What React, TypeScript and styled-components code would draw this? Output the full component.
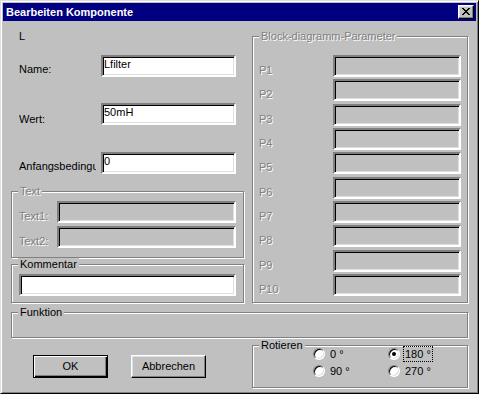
import styled, { createGlobalStyle } from 'styled-components';

const GlobalStyle = createGlobalStyle`
  html, body {
    margin: 0;
    padding: 0;
    background: #c0c0c0;
  }
  body {
    font-family: 'Liberation Sans', Arial, sans-serif;
    font-size: 11px;
  }
`;

const PARAMS = ['P1', 'P2', 'P3', 'P4', 'P5', 'P6', 'P7', 'P8', 'P9', 'P10'];

const CloseGlyph = () => (
  <svg width="8" height="7" viewBox="0 0 8 7" shapeRendering="crispEdges">
    <path
      d="M0 0h2v1H0zM6 0h2v1H6zM1 1h2v1H1zM5 1h2v1H5zM2 2h4v1H2zM3 3h2v1H3zM2 4h4v1H2zM1 5h2v1H1zM5 5h2v1H5zM0 6h2v1H0zM6 6h2v1H6z"
      fill="#000"
    />
  </svg>
);

const App = () => {
  return (
    <>
      <GlobalStyle />
      <Window>
        <TitleBar>
          <Title>Bearbeiten Komponente</Title>
          <CloseButton>
            <CloseGlyph />
          </CloseButton>
        </TitleBar>
        <Body>
          <TopRow>
            <LeftColumn>
              <TypeLabel>L</TypeLabel>
              <FieldRow $top={12}>
                <FieldLabel $offset={8}>Name:</FieldLabel>
                <Edit $width={135}>Lfilter</Edit>
              </FieldRow>
              <FieldRow $top={26}>
                <FieldLabel $offset={10}>Wert:</FieldLabel>
                <Edit $width={135}>50mH</Edit>
              </FieldRow>
              <FieldRow $top={27}>
                <FieldLabel $offset={8}>Anfangsbedingu</FieldLabel>
                <Edit $width={135}>0</Edit>
              </FieldRow>
              <Group $top={17} $height={67}>
                <GroupTitle $disabled>Text</GroupTitle>
                <TextRows>
                  <TextRow>
                    <SmallLabel $disabled>Text1:</SmallLabel>
                    <Edit $width={179} $disabled />
                  </TextRow>
                  <TextRow>
                    <SmallLabel $disabled>Text2:</SmallLabel>
                    <Edit $width={179} $disabled />
                  </TextRow>
                </TextRows>
              </Group>
              <Group $top={6} $height={39}>
                <GroupTitle>Kommentar</GroupTitle>
                <CommentBody>
                  <Edit $width={217} />
                </CommentBody>
              </Group>
            </LeftColumn>
            <RightColumn>
              <Group $height={267}>
                <GroupTitle $disabled>Block-diagramm-Parameter</GroupTitle>
                <ParamGrid>
                  {PARAMS.map((p) => (
                    <ParamRow key={p}>
                      <ParamLabel>{p}</ParamLabel>
                      <Edit $width={128} $disabled />
                    </ParamRow>
                  ))}
                </ParamGrid>
              </Group>
            </RightColumn>
          </TopRow>
          <Group $top={9} $height={26}>
            <GroupTitle>Funktion</GroupTitle>
          </Group>
          <BottomRow>
            <Buttons>
              <Button $default>OK</Button>
              <Button>Abbrechen</Button>
            </Buttons>
            <RotateGroup>
              <Group $height={43}>
                <GroupTitle>Rotieren</GroupTitle>
                <RadioGrid>
                  <RadioItem>
                    <Radio />
                    <RadioText>0 °</RadioText>
                  </RadioItem>
                  <RadioItem>
                    <Radio $checked />
                    <RadioText $focused>180 °</RadioText>
                  </RadioItem>
                  <RadioItem>
                    <Radio />
                    <RadioText>90 °</RadioText>
                  </RadioItem>
                  <RadioItem>
                    <Radio />
                    <RadioText>270 °</RadioText>
                  </RadioItem>
                </RadioGrid>
              </Group>
            </RotateGroup>
          </BottomRow>
        </Body>
      </Window>
    </>
  );
};

const Window = styled.div`
  box-sizing: border-box;
  width: 479px;
  height: 394px;
  padding: 2px;
  display: flex;
  flex-direction: column;
  background: #c0c0c0;
  border: 1px solid;
  border-color: #dfdfdf #000 #000 #dfdfdf;
  box-shadow: inset 1px 1px 0 #fff, inset -1px -1px 0 #808080;
  color: #000;
  font-family: 'Liberation Sans', Arial, sans-serif;
  font-size: 11px;
  line-height: 13px;
`;

const TitleBar = styled.div`
  height: 18px;
  flex-shrink: 0;
  display: flex;
  align-items: center;
  padding: 0 2px 0 3px;
  background: #000080;
`;

const Title = styled.span`
  flex: 1;
  color: #fff;
  font-weight: bold;
  font-size: 11px;
`;

const CloseButton = styled.div`
  box-sizing: border-box;
  width: 16px;
  height: 14px;
  display: flex;
  align-items: center;
  justify-content: center;
  padding: 0 1px 1px 0;
  background: #c0c0c0;
  border: 1px solid;
  border-color: #fff #000 #000 #fff;
  box-shadow: inset -1px -1px 0 #808080, inset 1px 1px 0 #dfdfdf;
`;

const Body = styled.div`
  flex: 1;
  display: flex;
  flex-direction: column;
  padding: 0 8px;
`;

const TopRow = styled.div`
  display: flex;
  gap: 8px;
  height: 282px;
`;

const LeftColumn = styled.div`
  width: 233px;
  display: flex;
  flex-direction: column;
`;

const RightColumn = styled.div`
  width: 216px;
  padding-top: 15px;
`;

const TypeLabel = styled.div`
  margin-top: 9px;
  padding-left: 8px;
`;

const FieldRow = styled.div<{ $top: number }>`
  display: flex;
  height: 22px;
  margin-top: ${(p) => p.$top}px;
  padding-left: 8px;
`;

const FieldLabel = styled.div<{ $offset: number }>`
  width: 77px;
  margin-right: 5px;
  padding-top: ${(p) => p.$offset}px;
  overflow: hidden;
  white-space: nowrap;
`;

const disabledText = `
  color: #808080;
  text-shadow: 1px 1px 0 #fff;
`;

const Edit = styled.div<{ $width: number; $disabled?: boolean }>`
  box-sizing: border-box;
  width: ${(p) => p.$width}px;
  height: 22px;
  padding: 1px 1px;
  background: ${(p) => (p.$disabled ? '#c0c0c0' : '#fff')};
  border: 2px solid;
  border-color: #808080 #fff #fff #808080;
  box-shadow: inset 1px 1px 0 #000, inset -1px -1px 0 #dfdfdf;
  white-space: nowrap;
  overflow: hidden;
`;

const Group = styled.div<{ $top?: number; $height: number }>`
  position: relative;
  box-sizing: border-box;
  flex-shrink: 0;
  height: ${(p) => p.$height}px;
  margin-top: ${(p) => p.$top ?? 0}px;
  border: 1px solid #808080;
  box-shadow: inset 1px 1px 0 #fff, 1px 1px 0 #fff;
`;

const GroupTitle = styled.span<{ $disabled?: boolean }>`
  position: absolute;
  top: -7px;
  left: 6px;
  padding: 0 2px;
  background: #c0c0c0;
  white-space: nowrap;
  ${(p) => (p.$disabled ? disabledText : '')}
`;

const TextRows = styled.div`
  display: flex;
  flex-direction: column;
  gap: 3px;
  padding: 9px 0 0 7px;
`;

const TextRow = styled.div`
  display: flex;
  height: 22px;
`;

const SmallLabel = styled.div<{ $disabled?: boolean }>`
  width: 38px;
  padding-top: 9px;
  ${(p) => (p.$disabled ? disabledText : '')}
`;

const CommentBody = styled.div`
  padding: 9px 0 0 7px;
`;

const ParamGrid = styled.div`
  display: grid;
  grid-template-rows: repeat(10, 22px);
  align-content: space-between;
  height: 241px;
  padding: 18px 0 0 6px;
`;

const ParamRow = styled.div`
  display: flex;
`;

const ParamLabel = styled.div`
  width: 74px;
  padding-top: 9px;
  ${disabledText}
`;

const BottomRow = styled.div`
  display: flex;
  gap: 8px;
  margin-top: 7px;
`;

const Buttons = styled.div`
  width: 233px;
  display: flex;
  gap: 23px;
  padding: 10px 0 0 22px;
  box-sizing: border-box;
`;

const Button = styled.div<{ $default?: boolean }>`
  box-sizing: border-box;
  width: 75px;
  height: 23px;
  display: flex;
  align-items: center;
  justify-content: center;
  background: #c0c0c0;
  border: 1px solid;
  border-color: ${(p) => (p.$default ? '#000' : '#fff #000 #000 #fff')};
  box-shadow: ${(p) =>
    p.$default
      ? 'inset 1px 1px 0 #fff, inset -1px -1px 0 #000, inset -2px -2px 0 #808080'
      : 'inset -1px -1px 0 #808080, inset 1px 1px 0 #dfdfdf'};
`;

const RotateGroup = styled.div`
  width: 216px;
`;

const RadioGrid = styled.div`
  display: grid;
  grid-template-columns: 75px 75px;
  grid-auto-rows: 17px;
  padding-left: 60px;
`;

const RadioItem = styled.div`
  display: flex;
  align-items: flex-start;
`;

const Radio = styled.span<{ $checked?: boolean }>`
  position: relative;
  box-sizing: border-box;
  width: 12px;
  height: 12px;
  margin-top: 2px;
  border-radius: 50%;
  background: #fff;
  border: 1px solid;
  border-color: #808080 #fff #fff #808080;
  box-shadow: inset 1px 1px 0 #000, inset -1px -1px 0 #dfdfdf;

  &::after {
    content: '';
    display: ${(p) => (p.$checked ? 'block' : 'none')};
    position: absolute;
    left: 3px;
    top: 3px;
    width: 4px;
    height: 4px;
    border-radius: 50%;
    background: #000;
  }
`;

const RadioText = styled.span<{ $focused?: boolean }>`
  margin-left: 3px;
  padding: 1px 1px 0;
  border: 1px dotted ${(p) => (p.$focused ? '#000' : 'transparent')};
  white-space: nowrap;
`;

export default App;
